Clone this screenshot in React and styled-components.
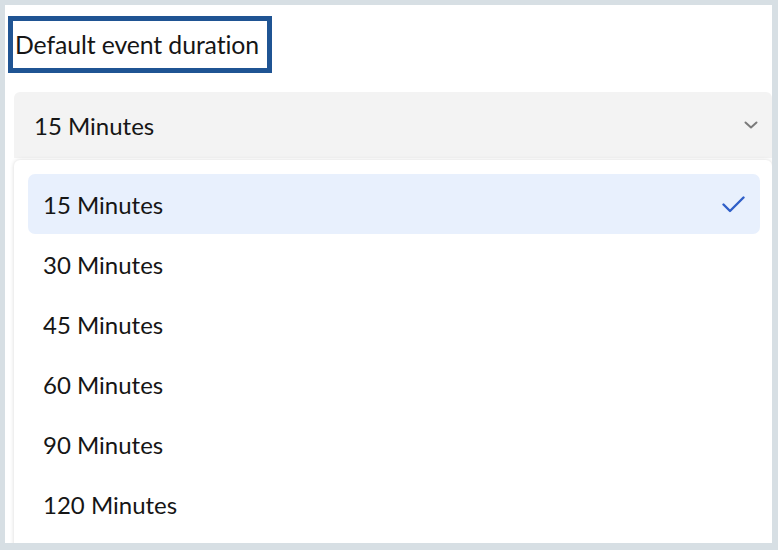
import React from "react";
import styled, { createGlobalStyle } from "styled-components";

const Global = createGlobalStyle`
  *, *::before, *::after { box-sizing: border-box; }
  html, body { margin: 0; padding: 0; background: #d7dfe4; }
  body { font-family: Lato, "Open Sans", sans-serif; color: #161616; }
  #root { width: 778px; height: 550px; padding: 5px 6px 7px 5px; overflow: hidden; }
`;

const Panel = styled.div`
  height: 538px;
  background: #ffffff;
  overflow: hidden;
  display: flex;
  flex-direction: column;
  padding: 11px 0 0 3px;
`;

const Label = styled.div`
  flex-shrink: 0;
  align-self: flex-start;
  padding: 0 8px 0 2px;
  height: 57px;
  display: flex;
  align-items: center;
  border: 5px solid #1f5493;
  font-size: 24.8px;
  letter-spacing: -0.1px;
`;

const Field = styled.div`
  flex-shrink: 0;
  margin: 19px 0 0 6px;
  display: flex;
  flex-direction: column;
`;

const Trigger = styled.div`
  height: 66px;
  background: #f3f3f3;
  border-radius: 6px 6px 0 0;
  display: flex;
  align-items: center;
  justify-content: space-between;
  padding: 0 14px 0 20px;
  font-size: 24px;
`;

const Menu = styled.div`
  margin-top: 2px;
  background: #fff;
  border-radius: 6px 6px 0 0;
  box-shadow: 0 0 4px rgba(0, 0, 0, 0.16);
  padding: 14px 12px 14px 14px;
  display: flex;
  flex-direction: column;
`;

const Item = styled.div`
  height: 60px;
  border-radius: 7px;
  display: flex;
  align-items: center;
  justify-content: space-between;
  padding: 0 15px 0 15px;
  font-size: 24px;
  background: ${(p) => (p.$selected ? "#e8f0fd" : "transparent")};
`;

const Chevron = () => (
  <svg width="14" height="8" viewBox="0 0 14 8" fill="none">
    <path d="M1.5 1.5 L7 6.5 L12.5 1.5" stroke="#7a7a7a" strokeWidth="2" strokeLinecap="round" strokeLinejoin="round" />
  </svg>
);

const Check = () => (
  <svg width="23" height="17" viewBox="0 0 23 17" fill="none">
    <path d="M1.5 8.5 L8 15 L21.5 1.5" stroke="#2f5fc8" strokeWidth="2.4" strokeLinecap="round" strokeLinejoin="round" />
  </svg>
);

const options = ["15 Minutes", "30 Minutes", "45 Minutes", "60 Minutes", "90 Minutes", "120 Minutes"];

export default function App() {
  return (
    <>
      <Global />
      <Panel>
        <Label>Default event duration</Label>
        <Field>
          <Trigger>
            <span>15 Minutes</span>
            <Chevron />
          </Trigger>
          <Menu>
            {options.map((o, i) => (
              <Item key={o} $selected={i === 0}>
                <span>{o}</span>
                {i === 0 && <Check />}
              </Item>
            ))}
          </Menu>
        </Field>
      </Panel>
    </>
  );
}
